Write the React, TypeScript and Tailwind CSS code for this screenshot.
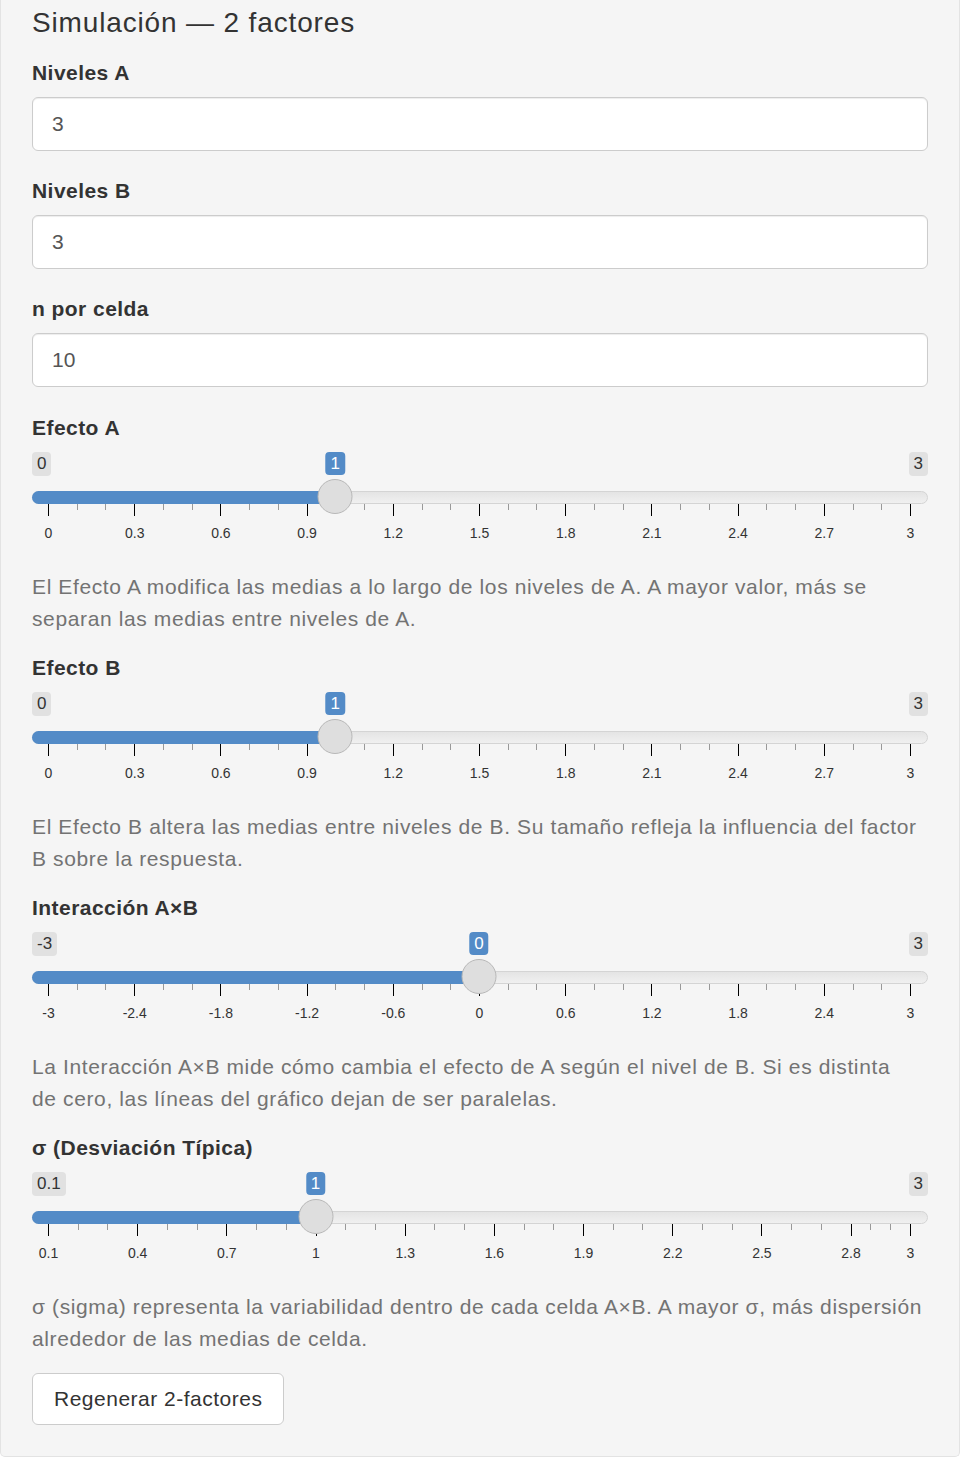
import React from 'react';

// Slider geometry (px, relative to the 896px wide slider box)
const GRID_LEFT = 16;
const GRID_SPAN = 862;

type SliderDef = {
    label: string;
    min: number;
    max: number;
    value: number;
    ticks: number[];
    help: string[];
};

const range = (start: number, step: number, count: number) =>
    Array.from({ length: count }, (_, i) => +(start + step * i).toFixed(1));

const sliders: SliderDef[] = [
    {
        label: 'Efecto A',
        min: 0,
        max: 3,
        value: 1,
        ticks: range(0, 0.3, 11),
        help: [
            'El Efecto A modifica las medias a lo largo de los niveles de A. A mayor valor, más se',
            'separan las medias entre niveles de A.',
        ],
    },
    {
        label: 'Efecto B',
        min: 0,
        max: 3,
        value: 1,
        ticks: range(0, 0.3, 11),
        help: [
            'El Efecto B altera las medias entre niveles de B. Su tamaño refleja la influencia del factor',
            'B sobre la respuesta.',
        ],
    },
    {
        label: 'Interacción A×B',
        min: -3,
        max: 3,
        value: 0,
        ticks: range(-3, 0.6, 11),
        help: [
            'La Interacción A×B mide cómo cambia el efecto de A según el nivel de B. Si es distinta',
            'de cero, las líneas del gráfico dejan de ser paralelas.',
        ],
    },
    {
        label: 'σ (Desviación Típica)',
        min: 0.1,
        max: 3,
        value: 1,
        ticks: [...range(0.1, 0.3, 10), 3],
        help: [
            'σ (sigma) representa la variabilidad dentro de cada celda A×B. A mayor σ, más dispersión',
            'alrededor de las medias de celda.',
        ],
    },
];

const numberInputs = [
    { label: 'Niveles A', value: '3' },
    { label: 'Niveles B', value: '3' },
    { label: 'n por celda', value: '10' },
];

function RangeSlider({ min, max, value, ticks }: SliderDef) {
    const toX = (v: number) => GRID_LEFT + ((v - min) / (max - min)) * GRID_SPAN;
    const handleX = toX(value);

    const minors: number[] = [];
    for (let i = 0; i < ticks.length - 1; i++) {
        const a = toX(ticks[i]);
        const b = toX(ticks[i + 1]);
        minors.push(a + (b - a) / 3, a + ((b - a) * 2) / 3);
    }

    return (
        <div className="relative flex w-[896px] flex-col">
            {/* min / max labels */}
            <div className="flex h-6 justify-between text-[17px] leading-6 text-[#333]">
                <span className="rounded-[4px] bg-[#e1e1e1] px-[5px]">{min}</span>
                <span className="rounded-[4px] bg-[#e1e1e1] px-[5px]">{max}</span>
            </div>

            {/* Track with filled bar */}
            <div className="relative mt-[15px] h-[13px] rounded-full border border-[#d4d4d4] bg-gradient-to-b from-[#e4e4e4] to-[#f0f0f0]">
                <div
                    className="absolute -left-px -top-px h-[13px] rounded-l-full bg-[#538bc7]"
                    style={{ width: handleX + 1 }}
                />
            </div>

            {/* Grid */}
            <div className="relative h-[67px]">
                {ticks.map((t) => (
                    <React.Fragment key={t}>
                        <div className="absolute top-0 h-3 w-px bg-black" style={{ left: toX(t) }} />
                        <span
                            className="absolute top-[21px] -translate-x-1/2 whitespace-nowrap text-[14px] leading-4 text-[#333]"
                            style={{ left: toX(t) + 0.5 }}
                        >
                            {t}
                        </span>
                    </React.Fragment>
                ))}
                {minors.map((x, i) => (
                    <div key={i} className="absolute top-0 h-[6px] w-px bg-[#999]" style={{ left: x }} />
                ))}
            </div>

            {/* Value tag + handle, drawn over the track */}
            <span
                className="absolute top-0 h-[23px] -translate-x-1/2 rounded-[4px] bg-[#538bc7] px-[5px] text-[17px] leading-[23px] text-white"
                style={{ left: handleX }}
            >
                {value}
            </span>
            <div
                className="absolute top-[27px] h-[35px] w-[35px] -translate-x-1/2 rounded-full border border-[#b8b8b8] bg-[#dedede]"
                style={{ left: handleX }}
            />
        </div>
    );
}

export default function App() {
    return (
        <div className="min-h-[1464px] bg-white font-['Liberation_Sans',Arial,sans-serif] text-[#333]">
            <div className="flex w-[960px] flex-col items-start rounded-b-[5px] border border-t-0 border-[#e3e3e3] bg-[#f5f5f5] px-[31px] pb-[31px] pt-[7px]">
                {/* Heading */}
                <h3 className="text-[28px] leading-[32px] font-medium tracking-[0.85px] text-[#333]">
                    Simulación — 2 factores
                </h3>

                {/* Numeric inputs */}
                <div className="mt-[20px] flex w-full flex-col gap-[26px]">
                    {numberInputs.map((item) => (
                        <div key={item.label} className="flex flex-col gap-[10px]">
                            <label className="text-[21px] leading-[28px] font-bold tracking-[0.45px]">{item.label}</label>
                            <div className="flex h-[54px] items-center rounded-[6px] border border-[#cccccc] bg-white px-[19px] text-[21px] text-[#555] shadow-[inset_0_1px_1px_rgba(0,0,0,0.075)]">
                                {item.value}
                            </div>
                        </div>
                    ))}
                </div>

                {/* Sliders */}
                <div className="mt-[27px] flex w-full flex-col gap-[19px]">
                    {sliders.map((s) => (
                        <div key={s.label} className="flex flex-col">
                            <label className="text-[21px] leading-[28px] font-bold tracking-[0.45px]">{s.label}</label>
                            <div className="mt-[10px]">
                                <RangeSlider {...s} />
                            </div>
                            <p className="text-[21px] leading-[32px] tracking-[0.62px] text-[#737373]">
                                {s.help.map((line) => (
                                    <span key={line} className="block whitespace-nowrap">
                                        {line}
                                    </span>
                                ))}
                            </p>
                        </div>
                    ))}
                </div>

                {/* Action */}
                <button className="mt-[18px] h-[52px] rounded-[6px] border border-[#cccccc] bg-white px-[21px] text-[21px] tracking-[0.5px] text-[#333]">
                    Regenerar 2-factores
                </button>
            </div>
        </div>
    );
}
